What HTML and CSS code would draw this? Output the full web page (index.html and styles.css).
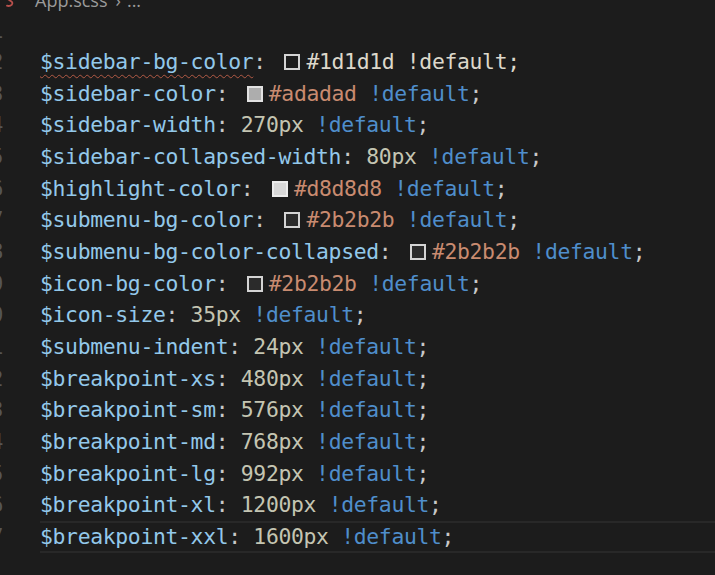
FILE: index.html
```html
<!DOCTYPE html>
<html>
<head>
<meta charset="utf-8">
<link rel="stylesheet" href="styles.css">
</head>
<body>
<div class="editor">
  <div class="crumbs">
    <svg class="sass" width="14" height="14" viewBox="0 0 14 14"><path d="M10 1.5C8 0.5 3.5 2 3.8 4.6 4 6.4 8.6 6.6 8.4 9.2 8.2 11.4 5 12.6 3 11.6" fill="none" stroke="#b8504c" stroke-width="1.8" stroke-linecap="round"/></svg>
    <span class="crumb">App.scss</span><span class="chev">›</span><span class="crumb">...</span>
  </div>
  <div class="code">
    <div class="row"><span class="ln"><span>1</span></span><span class="txt"></span></div>
    <div class="row"><span class="ln"><span>2</span></span><span class="txt"><span class="v squig">$sidebar-bg-color</span><span class="p">: </span><span class="sw sw-1d"></span><span class="lt">#1d1d1d !default;</span></span></div>
    <div class="row"><span class="ln"><span>3</span></span><span class="txt"><span class="v">$sidebar-color</span><span class="p">: </span><span class="sw sw-ad"></span><span class="h">#adadad</span> <span class="k">!default</span><span class="p">;</span></span></div>
    <div class="row"><span class="ln"><span>4</span></span><span class="txt"><span class="v">$sidebar-width</span><span class="p">: </span><span class="n">270px</span> <span class="k">!default</span><span class="p">;</span></span></div>
    <div class="row"><span class="ln"><span>5</span></span><span class="txt"><span class="v">$sidebar-collapsed-width</span><span class="p">: </span><span class="n">80px</span> <span class="k">!default</span><span class="p">;</span></span></div>
    <div class="row"><span class="ln"><span>6</span></span><span class="txt"><span class="v">$highlight-color</span><span class="p">: </span><span class="sw sw-d8"></span><span class="h">#d8d8d8</span> <span class="k">!default</span><span class="p">;</span></span></div>
    <div class="row"><span class="ln"><span>7</span></span><span class="txt"><span class="v">$submenu-bg-color</span><span class="p">: </span><span class="sw sw-2b"></span><span class="h">#2b2b2b</span> <span class="k">!default</span><span class="p">;</span></span></div>
    <div class="row"><span class="ln"><span>8</span></span><span class="txt"><span class="v">$submenu-bg-color-collapsed</span><span class="p">: </span><span class="sw sw-2b"></span><span class="h">#2b2b2b</span> <span class="k">!default</span><span class="p">;</span></span></div>
    <div class="row"><span class="ln"><span>9</span></span><span class="txt"><span class="v">$icon-bg-color</span><span class="p">: </span><span class="sw sw-2b"></span><span class="h">#2b2b2b</span> <span class="k">!default</span><span class="p">;</span></span></div>
    <div class="row"><span class="ln"><span>10</span></span><span class="txt"><span class="v">$icon-size</span><span class="p">: </span><span class="n">35px</span> <span class="k">!default</span><span class="p">;</span></span></div>
    <div class="row"><span class="ln"><span>11</span></span><span class="txt"><span class="v">$submenu-indent</span><span class="p">: </span><span class="n">24px</span> <span class="k">!default</span><span class="p">;</span></span></div>
    <div class="row"><span class="ln"><span>12</span></span><span class="txt"><span class="v">$breakpoint-xs</span><span class="p">: </span><span class="n">480px</span> <span class="k">!default</span><span class="p">;</span></span></div>
    <div class="row"><span class="ln"><span>13</span></span><span class="txt"><span class="v">$breakpoint-sm</span><span class="p">: </span><span class="n">576px</span> <span class="k">!default</span><span class="p">;</span></span></div>
    <div class="row"><span class="ln"><span>14</span></span><span class="txt"><span class="v">$breakpoint-md</span><span class="p">: </span><span class="n">768px</span> <span class="k">!default</span><span class="p">;</span></span></div>
    <div class="row"><span class="ln"><span>15</span></span><span class="txt"><span class="v">$breakpoint-lg</span><span class="p">: </span><span class="n">992px</span> <span class="k">!default</span><span class="p">;</span></span></div>
    <div class="row"><span class="ln"><span>16</span></span><span class="txt"><span class="v">$breakpoint-xl</span><span class="p">: </span><span class="n">1200px</span> <span class="k">!default</span><span class="p">;</span></span></div>
    <div class="row current"><span class="ln"><span>17</span></span><span class="txt"><span class="v">$breakpoint-xxl</span><span class="p">: </span><span class="n">1600px</span> <span class="k">!default</span><span class="p">;</span></span></div>
    <div class="row"><span class="ln"><span></span></span><span class="txt"></span></div>
  </div>
</div>
</body>
</html>
```
FILE: styles.css
```css
html, body {
  margin: 0;
  padding: 0;
  background: #1c1c1c;
}
.editor {
  width: 715px;
  height: 575px;
  overflow: hidden;
  background: #1c1c1c;
}
.crumbs {
  height: 14.5px;
  display: flex;
  align-items: flex-end;
  overflow: hidden;
  font-family: "Open Sans", "Noto Sans", sans-serif;
  font-size: 18px;
  color: #9a9a9a;
  line-height: 24px;
}
.crumbs > * {
  flex: none;
  margin-bottom: 3px;
}
.crumbs > .sass {
  margin-left: 4px;
  margin-right: 17px;
  margin-bottom: 7px;
}
.crumbs > .chev {
  margin-left: 8px;
  margin-right: 6px;
}
.code {
  font-family: "DejaVu Sans Mono", "Liberation Mono", monospace;
  font-size: 21.4px;
  letter-spacing: -0.33px;
  line-height: 31.67px;
  color: #c8c8c8;
}
.row {
  display: flex;
  height: 31.67px;
}
.ln {
  width: 3px;
  margin-right: 37px;
  overflow: hidden;
  direction: rtl;
  color: #555555;
  flex: none;
}
.txt {
  flex: 1;
  box-sizing: border-box;
  white-space: pre;
}
.current .txt {
  border-top: 2px solid #282828;
  border-bottom: 2px solid #282828;
  line-height: 27.67px;
}
.v { color: #93c8ea; }
.p { color: #c8c8c8; }
.n { color: #c4c5b2; }
.h { color: #c98b70; }
.k { color: #4f8ecb; }
.lt { color: #ddd8cb; }
.squig {
  text-decoration: underline wavy #b35a45;
  text-decoration-thickness: 1.3px;
  text-underline-offset: 5px;
}
.sw {
  display: inline-block;
  box-sizing: border-box;
  width: 16px;
  height: 16px;
  border: 2px solid #d4d4d4;
  margin: 0 6px 0 6px;
  vertical-align: -1px;
}
.sw-1d { background: #1d1d1d; }
.sw-ad { background: #adadad; border-color: #e2e2e2; }
.sw-d8 { background: #d8d8d8; border-color: #ececec; }
.sw-2b { background: #2b2b2b; }
```
